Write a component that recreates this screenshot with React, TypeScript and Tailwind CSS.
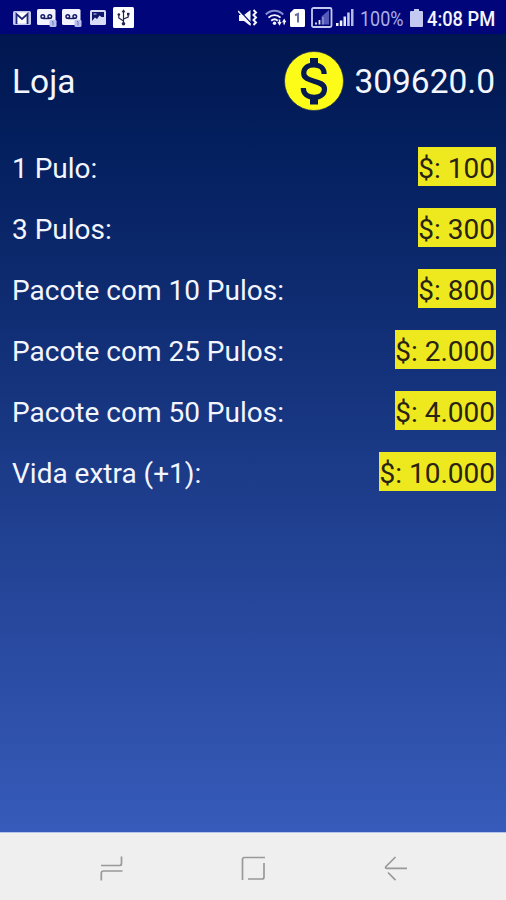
type Item = {
  label: string;
  price: string;
};

const items: Item[] = [
  { label: "1 Pulo:", price: "100" },
  { label: "3 Pulos:", price: "300" },
  { label: "Pacote com 10 Pulos:", price: "800" },
  { label: "Pacote com 25 Pulos:", price: "2.000" },
  { label: "Pacote com 50 Pulos:", price: "4.000" },
  { label: "Vida extra (+1):", price: "10.000" },
];

function MailIcon() {
  return (
    <svg width="18" height="14" viewBox="0 0 18 14" aria-hidden>
      <rect width="18" height="14" rx="1.5" fill="#c3c8ed" />
      <rect x="3.5" y="1.5" width="11" height="11" fill="#fff" />
      <path d="M3.500 13V3L9 8l5.500-5v10" fill="none" stroke="#20277c" strokeWidth="1.800" />
    </svg>
  );
}

function VoicemailIcon() {
  return (
    <svg width="20" height="18" viewBox="0 0 20 18" aria-hidden>
      <rect width="18.500" height="16" rx="1.500" fill="#f2f3ff" />
      <circle cx="5.800" cy="7.500" r="1.800" fill="none" stroke="#151b67" strokeWidth="1.500" />
      <circle cx="12.800" cy="7.500" r="1.800" fill="none" stroke="#151b67" strokeWidth="1.500" />
      <path d="M5.800 9.500h7" stroke="#151b67" strokeWidth="1.400" />
      <rect x="12.500" y="10.800" width="7" height="7.200" rx="1.500" fill="#b9bfec" />
      <path d="M15 12.500h1v4" fill="none" stroke="#6a71b8" strokeWidth="1" />
    </svg>
  );
}

function PictureIcon() {
  return (
    <svg width="16" height="15" viewBox="0 0 16 15" aria-hidden>
      <rect width="16" height="15" rx="1.500" fill="#d9dcf6" />
      <path d="M2 2h12v5h-2.500l-2-1.500L7 9 5 7.500 2 11z" fill="#10176c" />
      <path d="M3.500 4h3" stroke="#aab0e6" strokeWidth="1.200" />
    </svg>
  );
}

function UsbIcon() {
  return (
    <svg width="21" height="21" viewBox="0 0 21 21" aria-hidden>
      <rect width="21" height="21" rx="1.500" fill="#fff" />
      <path d="M10.500 4v13M10.500 14L5.800 11V7.500M10.500 12l4.700-2V7" fill="none" stroke="#20254f" strokeWidth="1.200" />
      <path d="M8.500 5.200l2-3 2 3z" fill="#20254f" />
      <circle cx="5.800" cy="7.500" r="1.300" fill="#20254f" />
      <rect x="14" y="5.800" width="2.500" height="2.500" fill="#20254f" />
      <circle cx="10.500" cy="16.800" r="1.800" fill="#20254f" />
    </svg>
  );
}

function MuteIcon() {
  return (
    <svg width="20" height="18" viewBox="0 0 20 18" aria-hidden>
      <path d="M1 6h5l6.500-5v16L6 12H1z" fill="#f4f5ff" />
      <path d="M1 1l12 13" stroke="#00067a" strokeWidth="1.200" />
      <path d="M0 2l12.500 13.500" stroke="#f4f5ff" strokeWidth="1.500" />
      <path d="M15.500 1l2.500 2.500L15.500 6 18 8.500 15.500 11l2.500 2.500-2.500 2.500" fill="none" stroke="#f4f5ff" strokeWidth="2" />
    </svg>
  );
}

function WifiIcon() {
  return (
    <svg width="22" height="18" viewBox="0 0 22 18" aria-hidden>
      <g fill="none" strokeWidth="1.900">
        <path d="M.8 5.500C5.500.4 13.500.4 18.200 5.500" stroke="#858dd4" />
        <path d="M3.500 8.700c3.500-3.500 8.500-3.500 12 0" stroke="#f4f5ff" />
        <path d="M6.200 11.700c2-1.800 4.600-1.800 6.600 0" stroke="#f4f5ff" />
      </g>
      <circle cx="9.500" cy="14.300" r="1.700" fill="#f4f5ff" />
      <path d="M12.400 13h4.200l-2.100 3.800zM17 13.300l2.200-3.800 2.200 3.800z" fill="#f4f5ff" />
      <path d="M14.500 10.500v3M19.200 12.500v3" stroke="#f4f5ff" strokeWidth="1.500" />
    </svg>
  );
}

function SimIcon() {
  return (
    <svg width="15" height="18" viewBox="0 0 15 18" aria-hidden>
      <path d="M4 0h9.500Q15 0 15 1.500v15q0 1.500-1.500 1.500h-12Q0 18 0 16.500V4z" fill="#fff" />
      <path d="M5 6.300l3-1.200v8.400" fill="none" stroke="#6b70a3" strokeWidth="2" />
    </svg>
  );
}

function BoxedSignalIcon() {
  return (
    <svg width="22" height="21" viewBox="0 0 22 21" aria-hidden>
      <rect x="1" y="1" width="19.500" height="19" rx="1.500" fill="none" stroke="#c6caef" strokeWidth="1.800" />
      <path d="M10.500 17.500V9.500L18 3v14.500z" fill="#5359b8" />
      <path d="M5 15.500v2M8.500 13v4.500" stroke="#e8eafb" strokeWidth="1.800" />
      <path d="M12 10v7.500" stroke="#8b92d6" strokeWidth="1.500" />
    </svg>
  );
}

function SignalIcon() {
  return (
    <svg width="18" height="17" viewBox="0 0 18 17" aria-hidden>
      <rect y="14" width="2.500" height="3" fill="#f4f5ff" />
      <rect x="3.800" y="11.500" width="2.500" height="5.500" fill="#f4f5ff" />
      <rect x="7.500" y="7.500" width="2.500" height="9.500" fill="#e3e5fb" />
      <rect x="11.200" y="3.500" width="2.500" height="13.500" fill="#c5c9ee" />
      <rect x="15" width="2.500" height="17" fill="#b4bae8" />
    </svg>
  );
}

function StatusBar() {
  return (
    <header className="flex h-[34px] shrink-0 items-center bg-[#00067a] pt-px pl-[13px]">
      <MailIcon />
      <div className="ml-[6px] flex gap-[5px]">
        <VoicemailIcon />
        <VoicemailIcon />
      </div>
      <div className="ml-2 flex items-center gap-[7px]">
        <PictureIcon />
        <UsbIcon />
      </div>
      <div className="ml-[104px] flex items-center">
        <MuteIcon />
        <div className="ml-[7px]">
          <WifiIcon />
        </div>
        <div className="ml-[3px]">
          <SimIcon />
        </div>
        <div className="ml-[6px]">
          <BoxedSignalIcon />
        </div>
        <div className="ml-[3px]">
          <SignalIcon />
        </div>
      </div>
      <div className="ml-[6px] w-[46px] pt-[2px]">
        <span className="block origin-left scale-x-[.9] text-[20px] leading-6 whitespace-nowrap text-[#a9afe6]">100%</span>
      </div>
      <svg width="13" height="18" viewBox="0 0 13 18" className="ml-1" aria-hidden>
        <path d="M4 0h5v2h3q1 0 1 1v14q0 1-1 1H1q-1 0-1-1V3q0-1 1-1h3z" fill="#c4c9f1" />
      </svg>
      <div className="ml-[4px] w-[70px] pt-[2px]">
        <span className="block origin-left scale-x-[.87] text-[21px] leading-6 font-medium whitespace-nowrap text-[#f4f5ff]">4:08 PM</span>
      </div>
    </header>
  );
}

function CoinIcon() {
  return (
    <svg width="60" height="60" viewBox="0 0 60 60" aria-hidden>
      <circle cx="30" cy="30" r="29.500" fill="#fdfb18" stroke="#22305a" strokeWidth=".7" />
      <path
        d="M40.200 23c0-5.500-4-9-10.200-9-6.300 0-10.300 3.300-10.300 8.300 0 10.200 20.800 5.500 20.800 15.700 0 5-4 8.300-10.300 8.300-6.700 0-10.900-3.500-10.900-9.300"
        fill="none"
        stroke="#071a50"
        strokeWidth="5.200"
      />
      <path d="M30 7v7M30 46v7.500" stroke="#071a50" strokeWidth="8" />
    </svg>
  );
}

function ShopRow({ label, price }: Item) {
  return (
    <li className="flex h-[39px] items-center justify-between">
      <span className="pt-[3px] text-[28px] leading-[39px] text-[#f3f5ff]">{label}</span>
      <button className="h-[39px] bg-[#eee91e] pr-px text-[28px] leading-[43px] text-[#292313]">$: {price}</button>
    </li>
  );
}

function NavBar() {
  return (
    <nav className="flex h-[68px] shrink-0 items-center justify-between border-t border-[#b4c4ea] bg-[#efefef] pt-[3px] pr-[99px] pl-[100px]">
      <svg width="23" height="25" viewBox="0 0 23 25" fill="none" stroke="#999" strokeWidth="1.700" aria-hidden>
        <path d="M1 9.500h18.500q2 0 2-2V.500M22.500 15H3.500q-2.200 0-2.200 2.200v7.300" />
      </svg>
      <svg width="25" height="25" viewBox="0 0 25 25" fill="none" stroke="#999" strokeWidth="1.700" aria-hidden>
        <path d="M1.500 24V3.500q0-2 2-2H24M23 7v14q0 2-2 2H7" />
      </svg>
      <svg width="23" height="25" viewBox="0 0 23 25" fill="none" stroke="#999" strokeWidth="1.700" aria-hidden>
        <path d="M11.500 1L2 10.500q-1.300 1.800.5 1.800H23M4 16.500l7.500 7.700" />
      </svg>
    </nav>
  );
}

export default function App() {
  return (
    <div className="flex h-[900px] w-[506px] flex-col overflow-hidden bg-[#efefef] font-['Roboto',sans-serif]">
      <StatusBar />
      <main className="flex-1 bg-linear-to-b from-[#001650] to-[#375bba] pr-[10px] pl-3">
        <div className="flex h-[94px] items-center text-[33.500px] text-[#f3f5ff]">
          <h1 className="pt-[2px]">Loja</h1>
          <div className="mr-px ml-auto flex items-center gap-[10px]">
            <CoinIcon />
            <span className="pt-[2px]">309620.0</span>
          </div>
        </div>
        <ul className="mt-[19px] flex flex-col gap-[22px]">
          {items.map((item) => (
            <ShopRow key={item.label} {...item} />
          ))}
        </ul>
      </main>
      <NavBar />
    </div>
  );
}
